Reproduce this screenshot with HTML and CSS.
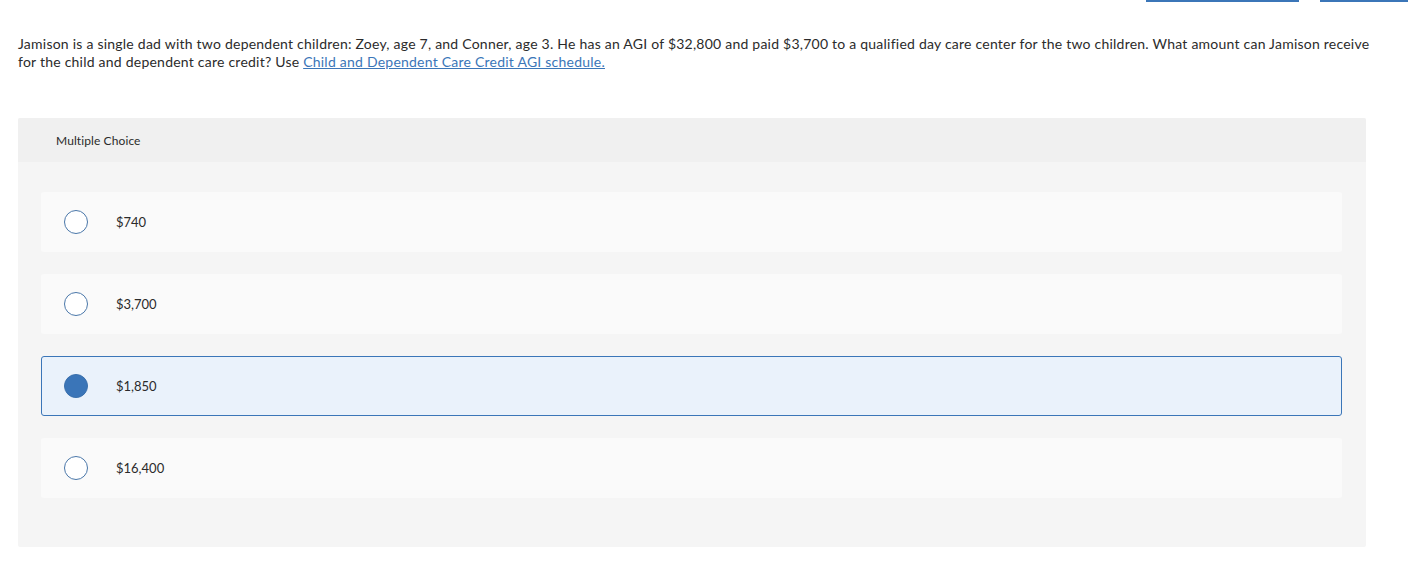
FILE: index.html
```html
<!DOCTYPE html>
<html>
<head>
<meta charset="utf-8">
<link rel="stylesheet" href="styles.css">
</head>
<body>
<div class="topbar">
  <span class="tab tab-a"></span>
  <span class="tab tab-b"></span>
</div>
<p class="question">Jamison is a single dad with two dependent children: Zoey, age 7, and Conner, age 3. He has an AGI of $32,800 and paid $3,700 to a qualified day care center for the two children. What amount can Jamison receive for the child and dependent care credit? Use <a href="#" class="link">Child and Dependent Care Credit AGI schedule.</a></p>
<div class="card">
  <div class="card-head">Multiple Choice</div>
  <div class="card-body">
    <div class="option"><span class="radio"></span><span class="label">$740</span></div>
    <div class="option"><span class="radio"></span><span class="label">$3,700</span></div>
    <div class="option selected"><span class="radio"></span><span class="label">$1,850</span></div>
    <div class="option"><span class="radio"></span><span class="label">$16,400</span></div>
  </div>
</div>
</body>
</html>
```

FILE: styles.css
```css
html, body {
  margin: 0;
  padding: 0;
  background: #fff;
}
body {
  font-family: "Lato", "Liberation Sans", sans-serif;
  color: #2b2b2b;
  width: 1408px;
  height: 588px;
  overflow: hidden;
}
.topbar {
  display: flex;
  justify-content: flex-end;
  gap: 21px;
  height: 2px;
}
.tab {
  height: 2px;
  background: #3b76b8;
}
.tab-a { width: 153px; }
.tab-b { width: 88px; }
.question {
  margin: 33px 36px 0 18px;
  font-size: 14px;
  line-height: 18px;
  letter-spacing: 0.23px;
}
.link {
  color: #3b76b8;
  text-decoration: underline;
}
.card {
  margin: 47px 0 0 18px;
  width: 1348px;
  background: #f5f5f5;
  border-radius: 2px;
}
.card-head {
  height: 44px;
  display: flex;
  align-items: center;
  padding-left: 38px;
  background: #f0f0f0;
  font-size: 12px;
  letter-spacing: 0.1px;
  border-radius: 2px 2px 0 0;
}
.card-body {
  padding: 30px 24px 49px 23px;
  display: flex;
  flex-direction: column;
  gap: 22px;
}
.option {
  height: 58px;
  border: 1px solid transparent;
  background: #fafafa;
  border-radius: 3px;
  display: flex;
  align-items: center;
  padding-left: 22px;
}
.option.selected {
  background: #eaf2fb;
  border-color: #3b76b8;
}
.radio {
  width: 22px;
  height: 22px;
  border: 1.5px solid #4a77a9;
  border-radius: 50%;
  background: #fff;
  flex: none;
}
.selected .radio {
  background: #3a75b8;
  border-color: #3a70ac;
}
.label {
  margin-left: 28px;
  font-size: 13px;
}
```
